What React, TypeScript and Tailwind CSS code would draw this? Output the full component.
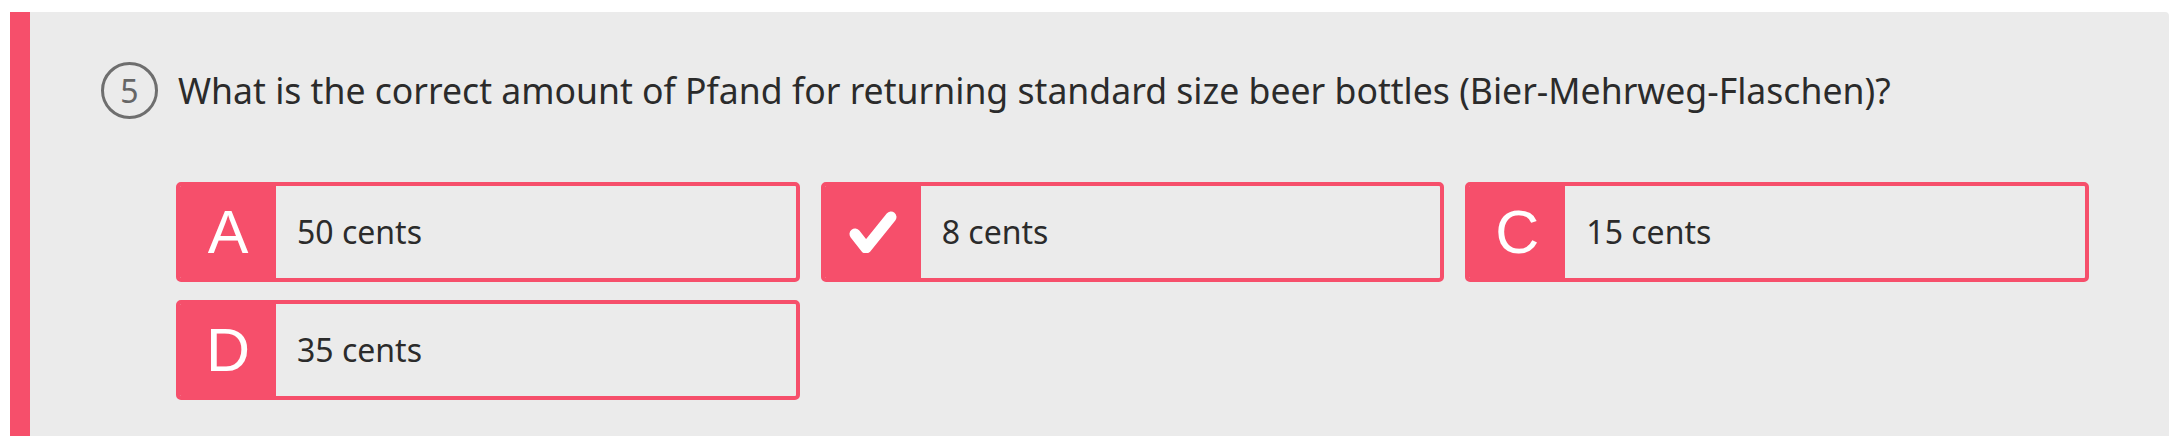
import React from "react";

const options = [
  { key: "A", label: "50 cents" },
  { key: "B", label: "8 cents", correct: true },
  { key: "C", label: "15 cents" },
  { key: "D", label: "35 cents" },
];

const Check = () => (
  <svg width="50" height="42" viewBox="0 0 50 42" fill="none">
    <polyline
      points="7,23 18,37 43,6"
      stroke="white"
      strokeWidth="11"
      strokeLinecap="round"
      strokeLinejoin="round"
    />
  </svg>
);

const Option = ({ k, label, correct }: { k: string; label: string; correct?: boolean }) => (
  <div className="flex h-[100px] overflow-hidden rounded-[5px] border-4 border-[#f64f6b]">
    <div className="flex w-[96px] shrink-0 items-center justify-center bg-[#f64f6b]">
      {correct ? (
        <Check />
      ) : (
        <span className="text-[61px] leading-none text-white [font-family:'Liberation_Sans',Arial,sans-serif]">
          {k}
        </span>
      )}
    </div>
    <div className="flex items-center pl-[21px] text-[32px] text-[#2b2b2b] [font-family:'Noto_Sans','Open_Sans',sans-serif]">
      {label}
    </div>
  </div>
);

export default function App() {
  return (
    <div className="h-[448px] w-[2184px] bg-white pl-[10px] pr-[15px] pt-[12px]">
      <div className="flex h-[424px] flex-col rounded-tr-[4px] border-l-[20px] border-[#f64f6b] bg-[#ebebeb] pl-[71px] pr-[80px] pt-[50px]">
        {/* Question */}
        <div className="flex items-center gap-[20px]">
          <div className="flex h-[57px] w-[57px] shrink-0 items-center justify-center rounded-full border-[3px] border-[#6e6e6e] text-[32px] text-[#666] [font-family:'Noto_Sans','Open_Sans',sans-serif]">
            5
          </div>
          <h2 className="text-[35.6px] text-[#2b2b2b] [font-family:'Noto_Sans','Open_Sans',sans-serif]">
            What is the correct amount of Pfand for returning standard size beer bottles (Bier-Mehrweg-Flaschen)?
          </h2>
        </div>

        {/* Answers */}
        <div className="ml-[75px] mt-[63px] grid grid-cols-3 gap-x-[21px] gap-y-[18px]">
          {options.map((o) => (
            <Option key={o.key} k={o.key} label={o.label} correct={o.correct} />
          ))}
        </div>
      </div>
    </div>
  );
}
